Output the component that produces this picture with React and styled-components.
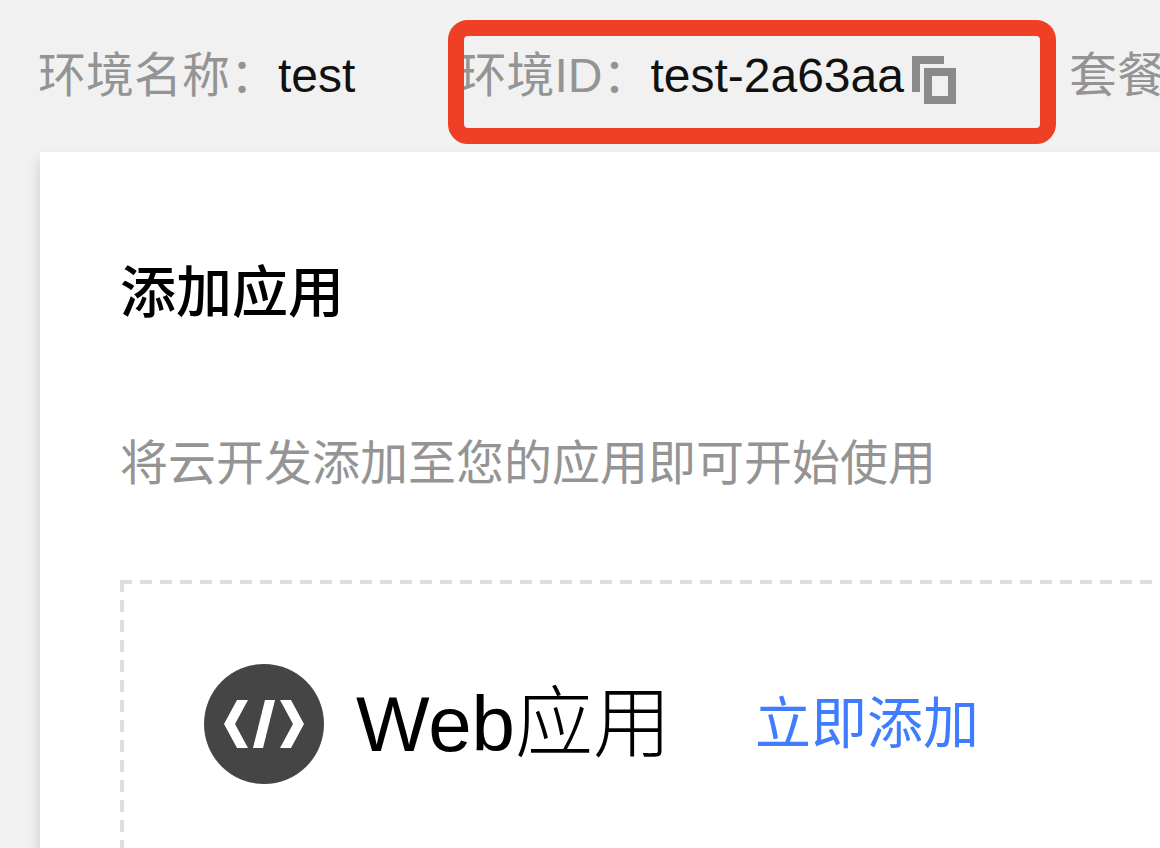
import React from "react";
import styled, { createGlobalStyle } from "styled-components";

const GlobalStyle = createGlobalStyle`
  * { box-sizing: border-box; }
  body {
    margin: 0;
    background: #f1f1f1;
    color: #000;
    font-family: "Liberation Sans", "Noto Sans CJK SC", sans-serif;
    overflow: hidden;
  }
`;

const Page = styled.div`
  display: flex;
  flex-direction: column;
  min-height: 100vh;
`;

const InfoBar = styled.header`
  display: flex;
  align-items: center;
  gap: 103px;
  padding: 40px 0 40px 38px;
  font-size: 48px;
  line-height: 72px;
  white-space: nowrap;
`;

const InfoItem = styled.div`
  position: relative;
  display: flex;
  flex: none;
  align-items: center;
`;

const InfoLabel = styled.span`
  color: #949494;
`;

const InfoValue = styled.span`
  color: #111;
`;

const Highlight = styled.div`
  position: absolute;
  top: -20px;
  bottom: -32px;
  left: -10px;
  right: -90px;
  border: 16px solid #ef4026;
  border-radius: 20px;
  pointer-events: none;
`;

const CopyButton = styled.button`
  display: flex;
  margin: 0 0 0 8px;
  padding: 0 10px 0 0;
  border: 0;
  background: none;
  color: #8a8a8a;
  cursor: pointer;
`;

const Card = styled.main`
  flex: 1;
  margin-left: 40px;
  padding: 96px 0 0 80px;
  background: #fff;
  box-shadow: 0 8px 12px rgba(0, 0, 0, 0.16);
`;

const Title = styled.h1`
  margin: 0;
  font-size: 56px;
  line-height: 80px;
  font-weight: 500;
  font-family: "Noto Sans CJK SC", sans-serif;
`;

const Description = styled.p`
  margin: 100px 0 80px;
  color: #949494;
  font-size: 48px;
  line-height: 72px;
`;

const AppPanel = styled.section`
  display: flex;
  align-items: center;
  padding: 84px 0 84px 84px;
  min-height: 288px;
  background:
    repeating-linear-gradient(to right, #dedede 0 12px, transparent 12px 20px) 0 0 / 100% 4px no-repeat,
    repeating-linear-gradient(to bottom, #dedede 0 12px, transparent 12px 20px) 0 0 / 4px 100% no-repeat;
`;

const AppName = styled.h2`
  margin: 0 84px 0 32px;
  font-size: 78px;
  line-height: 120px;
  font-weight: 300;
`;

const AddLink = styled.a`
  color: #3f7cff;
  font-size: 56px;
  line-height: 80px;
  text-decoration: none;
`;

function CopyIcon() {
  return (
    <svg width="44" height="56" viewBox="0 0 44 56" fill="none" stroke="currentColor" strokeWidth="8" aria-hidden="true">
      <path d="M32 12H4V44" />
      <rect x="16" y="24" width="24" height="28" />
    </svg>
  );
}

function CodeIcon() {
  return (
    <svg width="120" height="120" viewBox="0 0 120 120" aria-hidden="true">
      <circle cx="60" cy="60" r="60" fill="#454545" />
      <g fill="#fff">
        <path d="M33 36H44L31 60L44 84H33L20 60Z" />
        <path d="M61 36H71L59 84H49Z" />
        <path d="M76 36H87L100 60L87 84H76L89 60Z" />
      </g>
    </svg>
  );
}

export default function App() {
  return (
    <>
      <GlobalStyle />
      <Page>
        <InfoBar>
          <InfoItem>
            <InfoLabel>环境名称：</InfoLabel>
            <InfoValue>test</InfoValue>
          </InfoItem>
          <InfoItem>
            <InfoLabel>环境ID：</InfoLabel>
            <InfoValue>test-2a63aa</InfoValue>
            <CopyButton type="button" aria-label="复制环境ID">
              <CopyIcon />
            </CopyButton>
            <Highlight />
          </InfoItem>
          <InfoItem>
            <InfoLabel>套餐</InfoLabel>
          </InfoItem>
        </InfoBar>
        <Card>
          <Title>添加应用</Title>
          <Description>将云开发添加至您的应用即可开始使用</Description>
          <AppPanel>
            <CodeIcon />
            <AppName>Web应用</AppName>
            <AddLink href="#add">立即添加</AddLink>
          </AppPanel>
        </Card>
      </Page>
    </>
  );
}
